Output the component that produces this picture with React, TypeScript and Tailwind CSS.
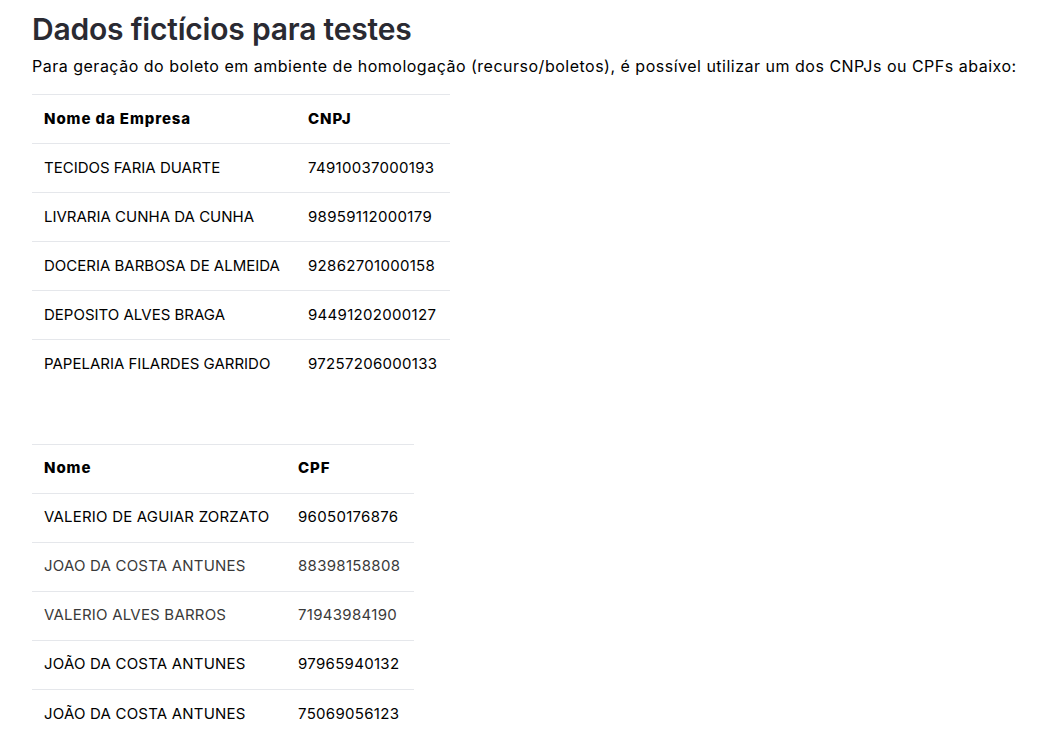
const empresas = [
  { nome: "TECIDOS FARIA DUARTE", cnpj: "74910037000193" },
  { nome: "LIVRARIA CUNHA DA CUNHA", cnpj: "98959112000179" },
  { nome: "DOCERIA BARBOSA DE ALMEIDA", cnpj: "92862701000158" },
  { nome: "DEPOSITO ALVES BRAGA", cnpj: "94491202000127" },
  { nome: "PAPELARIA FILARDES GARRIDO", cnpj: "97257206000133" },
];

const pessoas = [
  { nome: "VALERIO DE AGUIAR ZORZATO", cpf: "96050176876", muted: false },
  { nome: "JOAO DA COSTA ANTUNES", cpf: "88398158808", muted: true },
  { nome: "VALERIO ALVES BARROS", cpf: "71943984190", muted: true },
  { nome: "JOÃO DA COSTA ANTUNES", cpf: "97965940132", muted: false },
  { nome: "JOÃO DA COSTA ANTUNES", cpf: "75069056123", muted: false },
];

export default function App() {
  return (
    <div className="min-h-screen bg-white px-8 pt-[11px] font-['Inter',sans-serif] text-black">
      <h1 className="text-[30px] font-semibold leading-[36px] tracking-[-0.2px] text-[#2a2a32]">
        Dados fictícios para testes
      </h1>
      <p className="mt-[7px] whitespace-nowrap text-[16px] leading-6 tracking-[0.5px]">
        Para geração do boleto em ambiente de homologação (recurso/boletos), é possível utilizar um dos CNPJs ou CPFs abaixo:
      </p>

      {/* CNPJs */}
      <table className="mt-[16px] w-[418px] table-fixed border-collapse text-[15px]">
        <thead>
          <tr className="h-[49px] border-t border-[#e5e7eb]">
            <th className="w-[264px] px-3 text-left font-extrabold tracking-[0.9px]">Nome da Empresa</th>
            <th className="px-3 text-left font-extrabold tracking-[0.9px]">CNPJ</th>
          </tr>
        </thead>
        <tbody>
          {empresas.map((e) => (
            <tr key={e.cnpj} className="h-[49px] border-t border-[#e5e7eb]">
              <td className="px-3 whitespace-nowrap">{e.nome}</td>
              <td className="px-3 tracking-[0.3px]">{e.cnpj}</td>
            </tr>
          ))}
        </tbody>
      </table>

      {/* CPFs */}
      <table className="mt-[55px] w-[382px] table-fixed border-collapse text-[15px]">
        <thead>
          <tr className="h-[49px] border-t border-[#e5e7eb]">
            <th className="w-[254px] px-3 text-left font-extrabold tracking-[0.9px]">Nome</th>
            <th className="px-3 text-left font-extrabold tracking-[0.9px]">CPF</th>
          </tr>
        </thead>
        <tbody>
          {pessoas.map((p) => (
            <tr
              key={p.cpf}
              className={p.muted ? "h-[49px] border-t border-[#e5e7eb] text-[#3a3a3a]" : "h-[49px] border-t border-[#e5e7eb]"}
            >
              <td className="px-3 whitespace-nowrap tracking-[0.2px]">{p.nome}</td>
              <td className="px-3 tracking-[0.3px]">{p.cpf}</td>
            </tr>
          ))}
        </tbody>
      </table>
    </div>
  );
}
